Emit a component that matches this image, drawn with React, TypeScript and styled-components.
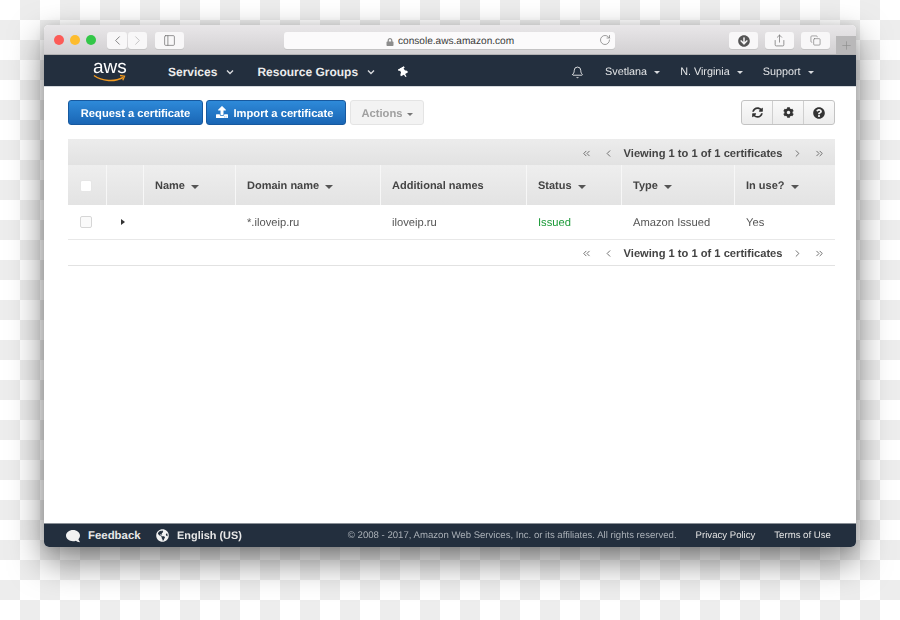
import React from "react";
import styled, { createGlobalStyle } from "styled-components";
import { FaArrowCircleDown, FaCog, FaComment, FaGlobeAmericas, FaLock, FaQuestionCircle, FaSyncAlt, FaThumbtack, FaUpload } from "react-icons/fa";
import { Bell, ChevronLeft, ChevronRight, ChevronsLeft, ChevronsRight, Copy, PanelLeft, Plus, RotateCw, Share } from "lucide-react";

const Global = createGlobalStyle`
  html, body { margin: 0; padding: 0; }
  body {
    width: 900px; height: 620px; overflow: hidden;
    font-family: "Liberation Sans", Arial, sans-serif;
    text-rendering: geometricPrecision;
    background-color: #fff;
    background-image: conic-gradient(#ededed 25%, #fff 0 50%, #ededed 0 75%, #fff 0);
    background-size: 40px 40px;
  }
`;

const Stage = styled.div`
  padding: 25px 44px 0;
`;
const Win = styled.div`
  width: 812px; height: 522px;
  border-radius: 5px;
  box-shadow: 0 14px 34px rgba(0,0,0,.5), 0 0 10px rgba(0,0,0,.1);
`;
const WinInner = styled.div`
  width: 100%; height: 100%;
  display: flex; flex-direction: column;
  border-radius: 5px;
  overflow: hidden;
  background: #fff;
  filter: blur(.3px);
`;
const TitleBar = styled.div`
  height: 30px; flex: none;
  display: flex; align-items: flex-start;
  padding: 7px 0 0 10px;
  box-sizing: border-box;
  background: linear-gradient(#e9e7e9, #d2d0d2);
  border-bottom: 1px solid #b1b0b1;
`;
const Light = styled.span<{ $c: string }>`
  width: 10px; height: 10px; border-radius: 50%;
  background: ${p => p.$c};
  margin: 3px 6px 0 0;
  flex: none;
`;
const ToolBtn = styled.div<{ $w: number; $ml: number; $dim?: boolean }>`
  width: ${p => p.$w}px; height: 17px;
  margin-left: ${p => p.$ml}px;
  flex: none;
  background: #f8f7f8;
  border-radius: 3px;
  box-shadow: 0 1px 0 #c4c3c4;
  display: flex; align-items: center; justify-content: center;
  color: ${p => (p.$dim ? "#bdbcbd" : "#767676")};
`;
const Address = styled.div`
  width: 331px; height: 17px; margin-left: 100px; flex: none;
  background: #fbfafb;
  border-radius: 3px;
  box-shadow: 0 1px 0 #c4c3c4;
  display: flex; align-items: center;
  font-size: 10.1px; color: #3a3a3a;
  position: relative;
  padding: 2px 0 0 102px; box-sizing: border-box;
  gap: 4px;
`;
const Reload = styled.span`
  position: absolute; right: 4px; top: 2px; color: #777; display: flex;
`;
const NewTab = styled.div`
  width: 20px; height: 18px;
  margin: 4px 0 0 6px;
  background: #b9b8b9;
  color: #8c8c8c;
  display: flex; align-items: center; justify-content: center;
  flex: none;
`;
const Nav = styled.div`
  height: 32px; flex: none;
  background: #232f3e;
  display: flex; align-items: center;
  color: #ebebeb;
  border-bottom: 1px solid #d5d9dd;
  box-sizing: border-box;
  padding-top: 3px;
`;
const Logo = styled.div`
  width: 33px; margin: -3px 0 0 49px; height: 24px; position: relative; flex: none;
  color: #fff;
  font-size: 19px; line-height: 17px; text-align: center;
  svg { position: absolute; left: 0; top: 15px; }
`;
const NavBold = styled.span<{ $ml: number }>`
  margin-left: ${p => p.$ml}px;
  font-weight: 700; font-size: 12px;
  display: flex; align-items: center;
  white-space: nowrap;
`;
const NavPlain = styled.span<{ $ml: number }>`
  margin-left: ${p => p.$ml}px;
  font-size: 10.8px; color: #e4e6e8;
  display: flex; align-items: center;
  white-space: nowrap;
`;
const NavIcon = styled.span<{ $ml: number }>`
  margin-left: ${p => p.$ml}px;
  display: flex; color: #fff;
`;
const Chevron = styled.svg<{ $ml: number }>`
  margin-left: ${p => p.$ml}px;
  flex: none;
`;
const Caret = styled.i<{ $ml?: number; $c?: string; $s?: number }>`
  display: inline-block;
  margin-left: ${p => p.$ml ?? 6}px;
  border-left: ${p => p.$s ?? 4}px solid transparent;
  border-right: ${p => p.$s ?? 4}px solid transparent;
  border-top: ${p => p.$s ?? 4}px solid ${p => p.$c ?? "#555"};
  margin-top: 1px;
`;
const Main = styled.div`
  flex: 1;
  padding: 13px 21px 0 24px;
`;
const Actions = styled.div`
  display: flex; height: 25px; align-items: stretch;
`;
const Primary = styled.div<{ $w: number }>`
  width: ${p => p.$w}px;
  margin-right: 3px;
  box-sizing: border-box;
  padding-top: 2px;
  background: linear-gradient(#2e8ad9, #1a66b5);
  border: 1px solid #17599f;
  border-radius: 3px;
  color: #fff; font-weight: 700; font-size: 11.2px;
  display: flex; align-items: center; justify-content: center; gap: 5px;
  svg { margin: -3px 0 0 -2px; }
`;
const Disabled = styled.div`
  width: 74px; margin-left: 1px;
  box-sizing: border-box;
  padding-top: 2px;
  background: #f3f3f3;
  border: 1px solid #e4e4e4;
  border-radius: 3px;
  color: #a0a0a0; font-weight: 700; font-size: 11.2px;
  display: flex; align-items: center; justify-content: center;
`;
const IconGroup = styled.div`
  margin-left: auto;
  display: flex;
  border: 1px solid #c3c3c3;
  border-radius: 3px;
  background: linear-gradient(#fafafa, #ececec);
`;
const IconBtn = styled.div<{ $last?: boolean }>`
  width: 30px; display: flex; align-items: center; justify-content: center;
  color: #333;
  border-right: ${p => (p.$last ? "none" : "1px solid #cfcfcf")};
`;
const Pager = styled.div<{ $bar?: boolean }>`
  height: 26px;
  box-sizing: border-box;
  display: flex; align-items: center; justify-content: flex-end;
  padding: ${p => (p.$bar ? "3px" : "2px")} 10px 0 0;
  font-size: 11.15px; font-weight: 700; color: #444;
  white-space: nowrap;
  background: ${p => (p.$bar ? "linear-gradient(#ececec, #e2e2e2)" : "transparent")};
  border-bottom: ${p => (p.$bar ? "none" : "1px solid #e2e2e2")};
  margin-top: ${p => (p.$bar ? 14 : 0)}px;
  svg { color: #666; flex: none; }
`;
const PagerText = styled.span`
  margin: 0 9.5px;
`;
const PagerGap = styled.span`
  width: 11px;
`;
const COLS = "38px 37px 92px 145px 146px 95px 113px 101px";
const HeaderRow = styled.div`
  display: grid; grid-template-columns: ${COLS};
  height: 40px;
`;
const HeadCell = styled.div<{ $first?: boolean }>`
  background: linear-gradient(#eeeeee, #e3e3e3);
  box-sizing: border-box;
  border-left: ${p => (p.$first ? "none" : "1px solid #f7f7f7")};
  padding: 2px 0 0 ${p => (p.$first ? 12 : 11)}px;
  display: flex; align-items: center;
  font-size: 11px; font-weight: 700; color: #444;
  white-space: nowrap;
`;
const DataRow = styled.div`
  display: grid; grid-template-columns: ${COLS};
  height: 35px;
  border-bottom: 1px solid #e8e8e8;
  box-sizing: border-box;
`;
const DataCell = styled.div<{ $ok?: boolean }>`
  display: flex; align-items: center;
  padding: 2px 0 0 12px;
  font-size: 11.2px;
  color: ${p => (p.$ok ? "#1d9a3a" : "#555")};
  white-space: nowrap;
`;
const Check = styled.span<{ $head?: boolean }>`
  width: 12px; height: 12px; flex: none;
  box-sizing: border-box;
  border-radius: 2px;
  margin-top: ${p => (p.$head ? 0 : -2)}px;
  background: ${p => (p.$head ? "#fff" : "#fafafa")};
  border: 1px solid ${p => (p.$head ? "#e6e6e6" : "#d6d6d6")};
`;
const Expand = styled.i`
  display: block; margin: -2px 0 0 3px;
  border-top: 3.5px solid transparent;
  border-bottom: 3.5px solid transparent;
  border-left: 4px solid #333;
`;
const Footer = styled.div`
  height: 24px; flex: none;
  background: #232f3e;
  border-top: 1px solid #8a9097;
  box-sizing: border-box;
  display: flex; align-items: center;
  color: #e8e8e8;
  svg { flex: none; }
`;
const FootBold = styled.span<{ $ml: number; $fs: number }>`
  margin-left: ${p => p.$ml}px;
  font-weight: 700; font-size: ${p => p.$fs}px; white-space: nowrap;
`;
const FootSmall = styled.span<{ $ml: number; $dim?: boolean }>`
  margin-left: ${p => p.$ml}px;
  font-size: 9.6px; white-space: nowrap;
  color: ${p => (p.$dim ? "#a9afb6" : "#e4e4e4")};
`;
const FootIcon = styled.span<{ $ml: number; $flip?: boolean }>`
  margin-left: ${p => p.$ml}px; display: flex; color: #f2f2f2;
  transform: ${p => (p.$flip ? "scaleX(-1)" : "none")};
`;

const Chev = ({ ml }: { ml: number }) => (
  <Chevron $ml={ml} width="8" height="6" viewBox="0 0 8 6" fill="none" stroke="#d8dadd" strokeWidth="1.4">
    <path d="M1 1.5 L4 4.5 L7 1.5" />
  </Chevron>
);

const PagerRow = ({ bar }: { bar?: boolean }) => (
  <Pager $bar={bar}>
    <ChevronsLeft size={11} />
    <PagerGap />
    <ChevronLeft size={11} />
    <PagerText>Viewing 1 to 1 of 1 certificates</PagerText>
    <ChevronRight size={11} />
    <PagerGap />
    <ChevronsRight size={11} />
  </Pager>
);

export default function App() {
  return (
    <>
      <Global />
      <Stage>
        <Win>
          <WinInner>
            <TitleBar>
              <Light $c="#fc5b57" />
              <Light $c="#fdbc2e" />
              <Light $c="#33c748" />
              <ToolBtn $w={20} $ml={5}><ChevronLeft size={15} strokeWidth={1.4} /></ToolBtn>
              <ToolBtn $w={19} $ml={1} $dim><ChevronRight size={15} strokeWidth={1.4} /></ToolBtn>
              <ToolBtn $w={29} $ml={8}><PanelLeft size={13} strokeWidth={1.4} /></ToolBtn>
              <Address>
                <FaLock size={8} color="#8d8d8d" />
                console.aws.amazon.com
                <Reload><RotateCw size={12} strokeWidth={1.4} /></Reload>
              </Address>
              <ToolBtn $w={29} $ml={114}><FaArrowCircleDown size={12} color="#555" /></ToolBtn>
              <ToolBtn $w={29} $ml={7}><Share size={13} strokeWidth={1.4} /></ToolBtn>
              <ToolBtn $w={29} $ml={7}><Copy size={11} strokeWidth={1.4} /></ToolBtn>
              <NewTab><Plus size={13} strokeWidth={1.2} /></NewTab>
            </TitleBar>
            <Nav>
              <Logo>
                aws
                <svg width="33" height="9" viewBox="0 0 33 9" fill="none">
                  <path d="M1 1.5 C9 7.5 22 8 30 3.5" stroke="#f29a1f" strokeWidth="1.5" />
                  <path d="M27 1.5 L31.5 2.2 L29.8 6.2" stroke="#f29a1f" strokeWidth="1.3" />
                </svg>
              </Logo>
              <NavBold $ml={42}>Services<Chev ml={9} /></NavBold>
              <NavBold $ml={23}>Resource Groups<Chev ml={9} /></NavBold>
              <NavIcon $ml={23}><FaThumbtack size={11} style={{ transform: "rotate(-30deg)" }} /></NavIcon>
              <NavIcon $ml={162}><Bell size={13} strokeWidth={1.5} /></NavIcon>
              <NavPlain $ml={21}>Svetlana<Caret $ml={7} $c="#d8dadd" $s={3} /></NavPlain>
              <NavPlain $ml={20}>N. Virginia<Caret $ml={7} $c="#d8dadd" $s={3} /></NavPlain>
              <NavPlain $ml={20}>Support<Caret $ml={7} $c="#d8dadd" $s={3} /></NavPlain>
            </Nav>
            <Main>
              <Actions>
                <Primary $w={135}>Request a certificate</Primary>
                <Primary $w={140}><FaUpload size={12} />Import a certificate</Primary>
                <Disabled>Actions<Caret $ml={4} $c="#777" $s={3} /></Disabled>
                <IconGroup>
                  <IconBtn><FaSyncAlt size={11} /></IconBtn>
                  <IconBtn><FaCog size={11} /></IconBtn>
                  <IconBtn $last><FaQuestionCircle size={12} /></IconBtn>
                </IconGroup>
              </Actions>
              <PagerRow bar />
              <HeaderRow>
                <HeadCell $first><Check $head /></HeadCell>
                <HeadCell />
                <HeadCell>Name<Caret /></HeadCell>
                <HeadCell>Domain name<Caret /></HeadCell>
                <HeadCell>Additional names</HeadCell>
                <HeadCell>Status<Caret /></HeadCell>
                <HeadCell>Type<Caret /></HeadCell>
                <HeadCell>In use?<Caret /></HeadCell>
              </HeaderRow>
              <DataRow>
                <DataCell><Check /></DataCell>
                <DataCell><Expand /></DataCell>
                <DataCell />
                <DataCell>*.iloveip.ru</DataCell>
                <DataCell>iloveip.ru</DataCell>
                <DataCell $ok>Issued</DataCell>
                <DataCell>Amazon Issued</DataCell>
                <DataCell>Yes</DataCell>
              </DataRow>
              <PagerRow />
            </Main>
            <Footer>
              <FootIcon $ml={22} $flip><FaComment size={14} /></FootIcon>
              <FootBold $ml={8} $fs={11.4}>Feedback</FootBold>
              <FootIcon $ml={15.5}><FaGlobeAmericas size={13} /></FootIcon>
              <FootBold $ml={8} $fs={10.9}>English (US)</FootBold>
              <FootSmall $ml={106} $dim>© 2008 - 2017, Amazon Web Services, Inc. or its affiliates. All rights reserved.</FootSmall>
              <FootSmall $ml={19}>Privacy Policy</FootSmall>
              <FootSmall $ml={19}>Terms of Use</FootSmall>
            </Footer>
          </WinInner>
        </Win>
      </Stage>
    </>
  );
}
